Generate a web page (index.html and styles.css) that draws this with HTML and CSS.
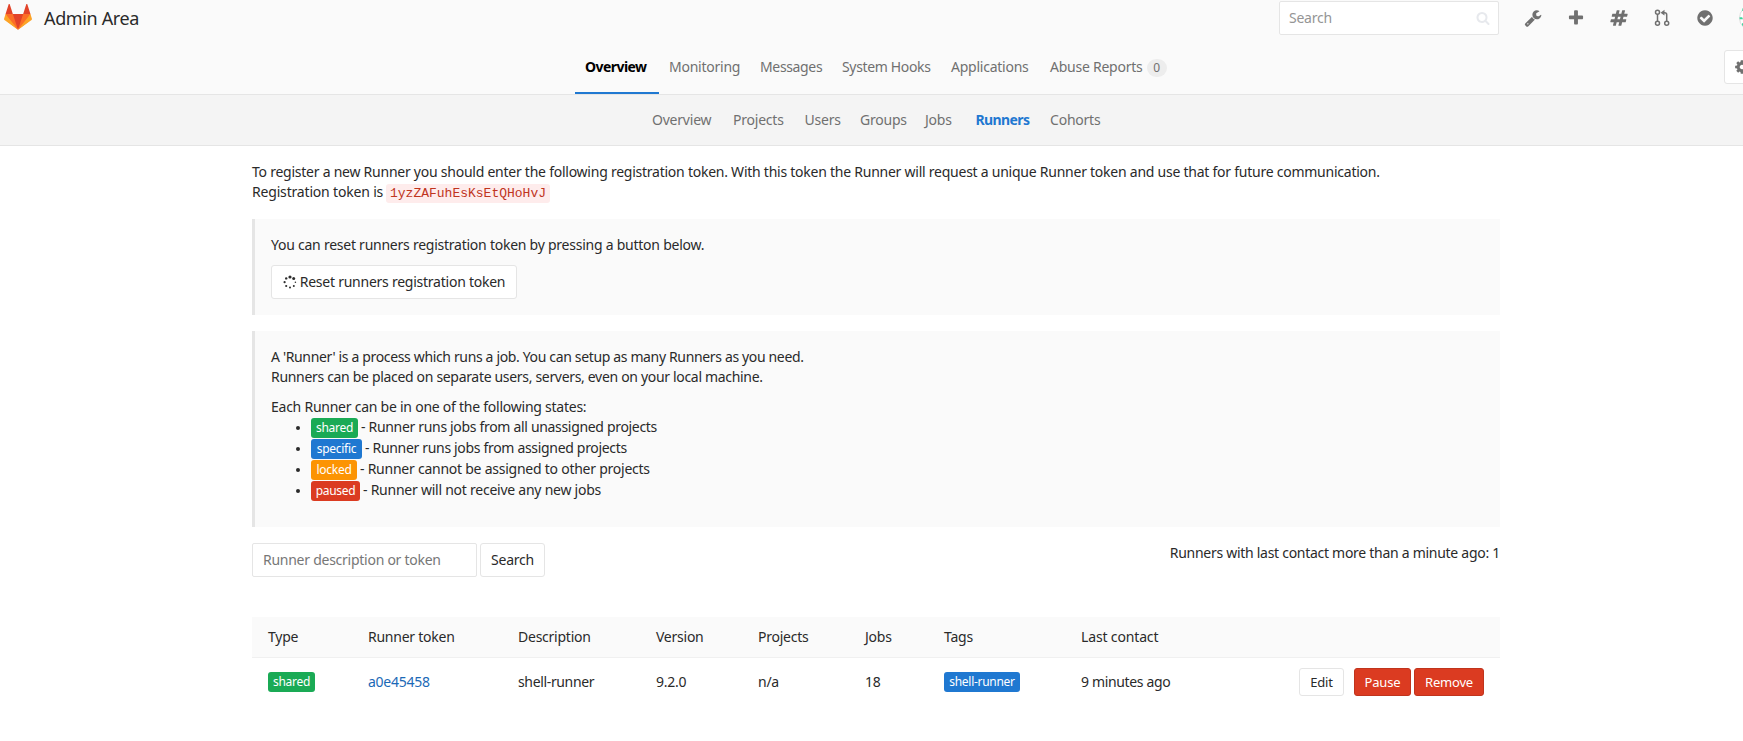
FILE: index.html
```
<!DOCTYPE html>
<html lang="en">
<head>
<meta charset="utf-8">
<title>Admin Area</title>
<link rel="stylesheet" href="styles.css">
</head>
<body>
<header class="page-header">
  <div class="topbar">
    <svg class="logo" viewBox="0 0 36 36">
      <path fill="#e24329" d="M2 14l9.38 9v-9l-4-12.28c-.205-.632-1.176-.632-1.38 0z"/>
      <path fill="#e24329" d="M34 14l-9.38 9v-9l4-12.28c.205-.632 1.176-.632 1.38 0z"/>
      <path fill="#e24329" d="M18 34.38 3 14h30z"/>
      <path fill="#fc6d26" d="M18 34.38 11.38 14H2l4 11z"/>
      <path fill="#fc6d26" d="M18 34.38 24.62 14H34l-4 11z"/>
      <path fill="#fca326" d="M2 14L.1 20.16c-.18.565 0 1.2.5 1.56l17.42 12.66z"/>
      <path fill="#fca326" d="M34 14l1.9 6.16c.18.565 0 1.2-.5 1.56L18 34.38z"/>
    </svg>
    <h1 class="title">Admin Area</h1>
    <div class="tools">
      <div class="search"><span>Search</span>
        <svg class="search-icon" viewBox="0 0 1792 1792"><path d="M1216 832q0-185-131.5-316.5t-316.5-131.5-316.5 131.5-131.5 316.5 131.5 316.5 316.5 131.5 316.5-131.5 131.5-316.5zm512 832q0 52-38 90t-90 38q-54 0-90-38l-343-342q-179 124-399 124-143 0-273.5-55.5t-225-150-150-225-55.5-273.5 55.5-273.5 150-225 225-150 273.5-55.5 273.5 55.5 225 150 150 225 55.5 273.5q0 220-124 399l343 343q37 37 37 90z"/></svg>
      </div>
      <svg class="icon" viewBox="0 0 1792 1792"><path d="M448 1472q0-26-19-45t-45-19-45 19-19 45 19 45 45 19 45-19 19-45zm644-420l-682 682q-37 37-90 37-52 0-91-37l-106-108q-38-36-38-90 0-53 38-91l681-681q39 98 114.500 173.500t173.500 114.500zm634-435q0 39-23 106-47 134-164.500 217.500t-258.500 83.500q-185 0-316.500-131.500t-131.500-316.500 131.500-316.500 316.500-131.500q58 0 121.500 16.500t107.500 46.500q16 11 16 28t-16 28l-293 169v224l193 107q5-3 79-48.500t135.500-81 70.500-35.500q15 0 23.500 10t8.500 25z"/></svg>
      <svg class="icon" viewBox="0 0 1792 1792"><path d="M1600 736v192q0 40-28 68t-68 28h-416v416q0 40-28 68t-68 28h-192q-40 0-68-28t-28-68v-416h-416q-40 0-68-28t-28-68v-192q0-40 28-68t68-28h416v-416q0-40 28-68t68-28h192q40 0 68 28t28 68v416h416q40 0 68 28t28 68z"/></svg>
      <svg class="icon" viewBox="0 0 1792 1792"><path d="M991 1024l64-256h-254l-64 256h254zm768-504l-56 224q-7 24-31 24h-327l-64 256h311q15 0 25 12 10 14 6 28l-56 224q-5 24-31 24h-327l-81 328q-7 24-31 24h-224q-16 0-26-12-9-12-6-28l78-312h-254l-81 328q-7 24-31 24h-225q-15 0-25-12-9-12-6-28l78-312h-311q-15 0-25-12-9-12-6-28l56-224q7-24 31-24h327l64-256h-311q-15 0-25-12-10-14-6-28l56-224q5-24 31-24h327l81-328q7-24 32-24h224q15 0 25 12 9 12 6 28l-78 312h254l81-328q7-24 32-24h224q15 0 25 12 9 12 6 28l-78 312h311q15 0 25 12 9 12 6 28z"/></svg>
      <svg class="icon line" viewBox="0 0 18 18"><circle cx="4.500" cy="3.300" r="2"/><circle cx="4.500" cy="14.300" r="2"/><circle cx="13.700" cy="14.300" r="2"/><path d="M4.500 5.300v7M13.700 12.300V5.700q0-2-2-2H10"/><path class="solid" d="M7.500 3.700l4-2.900v5.800z"/></svg>
      <svg class="icon" viewBox="0 0 1792 1792"><path d="M1412 734q0-28-18-46l-91-90q-19-19-45-19t-45 19l-408 407-226-226q-19-19-45-19t-45 19l-91 90q-18 18-18 46 0 27 18 45l362 362q19 19 45 19 27 0 46-19l543-543q18-18 18-45zm252 162q0 209-103 385.500t-279.500 279.500-385.500 103-385.500-103-279.500-279.500-103-385.500 103-385.500 279.500-279.500 385.500-103 385.500 103 279.500 279.500 103 385.500z"/></svg>
      <svg class="avatar" viewBox="0 0 26 26"><circle cx="13" cy="13" r="12.500" fill="#fff" stroke="#dcdcdc"/><path fill="#3fd6a0" d="M3.500 3.500L5 2v4H3.200zM.6 12.200h2.600l.8 2H.6zM3 18.200h2v4.500L3 20z"/></svg>
    </div>
  </div>
  <div class="navbar">
    <nav class="tabs">
      <a class="tab active">Overview</a><a class="tab">Monitoring</a><a class="tab tight">Messages</a><a class="tab tight">System Hooks</a><a class="tab">Applications</a><a class="tab">Abuse Reports<span class="badge">0</span></a>
    </nav>
    <div class="settings"><svg viewBox="0 0 1792 1792"><path d="M1152 896q0-106-75-181t-181-75-181 75-75 181 75 181 181 75 181-75 75-181zm512-109v222q0 12-8 23t-20 13l-185 28q-19 54-39 91 35 50 107 138 10 12 10 25t-9 23q-27 37-99 108t-94 71q-12 0-26-9l-138-108q-44 23-91 38-16 136-29 186-7 28-36 28h-222q-14 0-24.500-8.500t-11.500-21.500l-28-184q-49-16-90-37l-141 107q-10 9-25 9-14 0-25-11-126-114-165-168-7-10-7-23 0-12 8-23 15-21 51-66.500t54-70.500q-27-50-41-99l-183-27q-13-2-21-12.500t-8-23.500v-222q0-12 8-23t19-13l186-28q14-46 39-92-40-57-107-138-10-12-10-24 0-10 9-23 26-36 98.500-107.500t94.500-71.500q13 0 26 10l138 107q44-23 91-38 16-136 29-186 7-28 36-28h222q14 0 24.500 8.500t11.500 21.500l28 184q49 16 90 37l142-107q9-9 24-9 13 0 25 10 129 119 165 170 7 8 7 22 0 12-8 23-15 21-51 66.500t-54 70.500q26 50 41 98l183 28q13 2 21 12.500t8 23.500z"/></svg></div>
  </div>
</header>
<nav class="subnav">
  <a class="sub">Overview</a><a class="sub">Projects</a><a class="sub">Users</a><a class="sub">Groups</a><a class="sub">Jobs</a><a class="sub current">Runners</a><a class="sub">Cohorts</a>
</nav>
<main class="content">
  <p class="intro">To register a new Runner you should enter the following registration token. With this token the Runner will request a unique Runner token and use that for future communication.<br><span class="token-label">Registration token is</span><code class="token">1yzZAFuhEsKsEtQHoHvJ</code></p>

  <section class="well">
    <p>You can reset runners registration token by pressing a button below.</p>
    <button class="btn reset"><svg class="spinner" viewBox="0 0 14 14"><circle cx="7" cy="2" r="1.600"/><circle cx="10.700" cy="3.400" r="1.500"/><circle cx="12.400" cy="7.200" r=".8"/><circle cx="10.800" cy="11" r="1"/><circle cx="7" cy="12.600" r="1"/><circle cx="3.200" cy="11" r="1.100"/><circle cx="1.600" cy="7.200" r="1.100"/><circle cx="3.200" cy="3.400" r="1.200"/></svg>Reset runners registration token</button>
  </section>

  <section class="well states">
    <p><span class="tight">A 'Runner' is a process which runs a job. You can setup as many Runners as you need.</span><br><span class="snug">Runners can be placed on separate users, servers, even on your local machine.</span></p>
    <p class="states-title">Each Runner can be in one of the following states:</p>
    <ul>
      <li class="snug"><span class="label green w-shared">shared</span>- Runner runs jobs from all unassigned projects</li>
      <li class="snug"><span class="label blue w-specific">specific</span>- Runner runs jobs from assigned projects</li>
      <li><span class="label orange w-locked">locked</span>- Runner cannot be assigned to other projects</li>
      <li><span class="label red w-paused">paused</span>- Runner will not receive any new jobs</li>
    </ul>
  </section>

  <div class="filter">
    <div class="field">Runner description or token</div>
    <button class="btn">Search</button>
    <span class="summary">Runners with last contact more than a minute ago: 1</span>
  </div>

  <div class="table">
    <div class="row head"><span>Type</span><span>Runner token</span><span>Description</span><span>Version</span><span>Projects</span><span>Jobs</span><span>Tags</span><span class="loose">Last contact</span></div>
    <div class="row">
      <span class="cell-label"><span class="label green w-shared">shared</span></span>
      <a class="link">a0e45458</a>
      <span class="tight">shell-runner</span><span>9.2.0</span><span>n/a</span><span>18</span>
      <span class="cell-label"><span class="label blue w-tag">shell-runner</span></span>
      <span class="tight">9 minutes ago</span>
      <div class="actions"><button class="btn small edit">Edit</button><button class="btn small danger pause">Pause</button><button class="btn small danger remove">Remove</button></div>
    </div>
  </div>
</main>
</body>
</html>
```

FILE: styles.css
```
* { box-sizing: border-box; }
body {
  margin: 0;
  height: 741px;
  overflow: hidden;
  background: #fff;
  color: #2a2a2a;
  font: 14px/20px "Noto Sans", sans-serif;
  letter-spacing: -0.245px;
}
p, h1, ul { margin: 0; }
.tight { letter-spacing: -0.35px; }
.snug { letter-spacing: -0.32px; }
.loose { letter-spacing: -0.15px; }

.page-header { height: 95px; background: #fafafa; border-bottom: 1px solid #e5e5e5; }
.topbar { display: flex; height: 36px; padding-left: 4px; overflow: hidden; }
.logo { width: 28px; height: 28px; margin: 3px 12px 0 0; flex: none; }
.title { font-size: 18px; line-height: 36px; font-weight: 400; letter-spacing: -0.37px; }
.tools { display: flex; align-items: center; gap: 25px; width: 464px; margin-left: auto; overflow: hidden; }
.search {
  display: flex; align-items: center; justify-content: space-between; flex: none;
  width: 220px; height: 34px; padding: 0 8px 0 9px;
  background: #fff; border: 1px solid #e5e5e5; border-radius: 2px; color: #959595;
}
.search-icon { width: 14px; height: 14px; fill: #e7e9ed; }
.icon { width: 18px; height: 18px; flex: none; fill: #707070; }
.icon.line { fill: none; stroke: #707070; stroke-width: 1.5; }
.icon.line .solid { fill: #707070; stroke: none; }
.avatar { width: 26px; height: 26px; flex: none; }

.navbar { display: flex; height: 58px; padding-left: 575px; overflow: hidden; }
.tabs { display: grid; grid-template-columns: 84px 91px 82px 109px 99px 137px; }
.tab { padding: 21px 0 0 10px; color: #707070; white-space: nowrap; }
.tab.active { color: #000; font-weight: 700; letter-spacing: -0.55px; border-bottom: 2px solid #1f78d1; }
.badge {
  display: inline-block; width: 20px; margin-left: 4px; border-radius: 10px;
  background: #ededed; font-size: 12px; line-height: 18px; text-align: center;
}
.settings {
  flex: none; width: 52px; height: 34px; margin: 14px 0 0 547px; padding: 8px 9px;
  background: #fff; border: 1px solid #e5e5e5; border-radius: 3px;
}
.settings svg { display: block; width: 16px; height: 16px; fill: #707070; }

.subnav {
  display: grid; grid-template-columns: 81px 71.5px 55.5px 65px 50.5px 74.5px 70px;
  height: 51px; padding-left: 642px;
  background: #f4f4f4; border-bottom: 1px solid #e5e5e5;
}
.sub { padding: 15px 0 0 10px; color: #707070; letter-spacing: -0.22px; }
.sub.current { color: #1f78d1; font-weight: 700; letter-spacing: -0.6px; }

.content { width: 1248px; margin: 16px 0 0 252px; }
.intro { white-space: nowrap; }
.token-label { display: inline-block; width: 134px; letter-spacing: -0.18px; }
.token {
  padding: 2px 4px; border-radius: 3px; background: #feecec; color: #c0341d;
  font: 13px/14px "Liberation Mono", monospace; letter-spacing: 0;
}

.well { padding: 16px; border-left: 3px solid #e5e5e5; background: #fafafa; margin-top: 16px; }
.intro + .well { margin-top: 17px; }
.btn {
  display: inline-flex; align-items: center; justify-content: center;
  height: 34px; padding: 0; background: #fff; border: 1px solid #e5e5e5; border-radius: 3px;
  color: #2a2a2a; font: inherit; letter-spacing: inherit; width: 65px;
}
.btn.reset { width: 246px; margin-top: 10px; display: flex; }
.spinner { width: 14px; height: 14px; margin-right: 3px; fill: #2e2e2e; }
.states { height: 196px; }
.states-title { margin-top: 10px; }
.states ul { padding-left: 25px; list-style: none; }
.states li { display: flex; height: 21px; }
.states li::before {
  content: ""; width: 4px; height: 4px; margin: 9px 11px 0 0;
  border-radius: 50%; background: #2a2a2a;
}

.label {
  display: block; height: 20px; border-radius: 3px; color: #fff;
  font-size: 12px; line-height: 19px; text-align: center; letter-spacing: -0.28px;
}
.states .label { margin: 1px 3px 0 0; }
.green { background: #1aaa55; }
.blue { background: #1f78d1; }
.orange { background: #fc9403; }
.red { background: #db3b21; }
.w-shared { width: 47px; }
.w-specific { width: 51px; }
.w-locked { width: 46px; }
.w-paused { width: 49px; }
.w-tag { width: 76px; }

.filter { display: flex; margin-top: 16px; }
.field {
  width: 225px; height: 34px; margin-right: 3px; padding: 6px 10px;
  border: 1px solid #e5e5e5; border-radius: 2px; color: #777; letter-spacing: -0.26px;
}
.summary { margin-left: auto; letter-spacing: -0.28px; }

.table { margin-top: 40px; }
.row {
  display: grid; align-items: center; height: 48px; padding-left: 16px;
  grid-template-columns: 100px 150px 138px 102px 107px 79px 137px 140px 1fr;
}
.row.head { height: 41px; background: #fafafa; border-bottom: 1px solid #f0f0f0; }
.link { color: #1b69b6; }
.actions { display: flex; justify-content: flex-end; padding-right: 16px; }
.btn.small { height: 28px; font-size: 13px; letter-spacing: -0.2px; }
.btn.edit { width: 45px; margin-right: 10px; }
.btn.danger { background: #db3b21; border-color: #c0341d; color: #fff; }
.btn.pause { width: 57px; margin-right: 3px; }
.btn.remove { width: 70px; }
```
